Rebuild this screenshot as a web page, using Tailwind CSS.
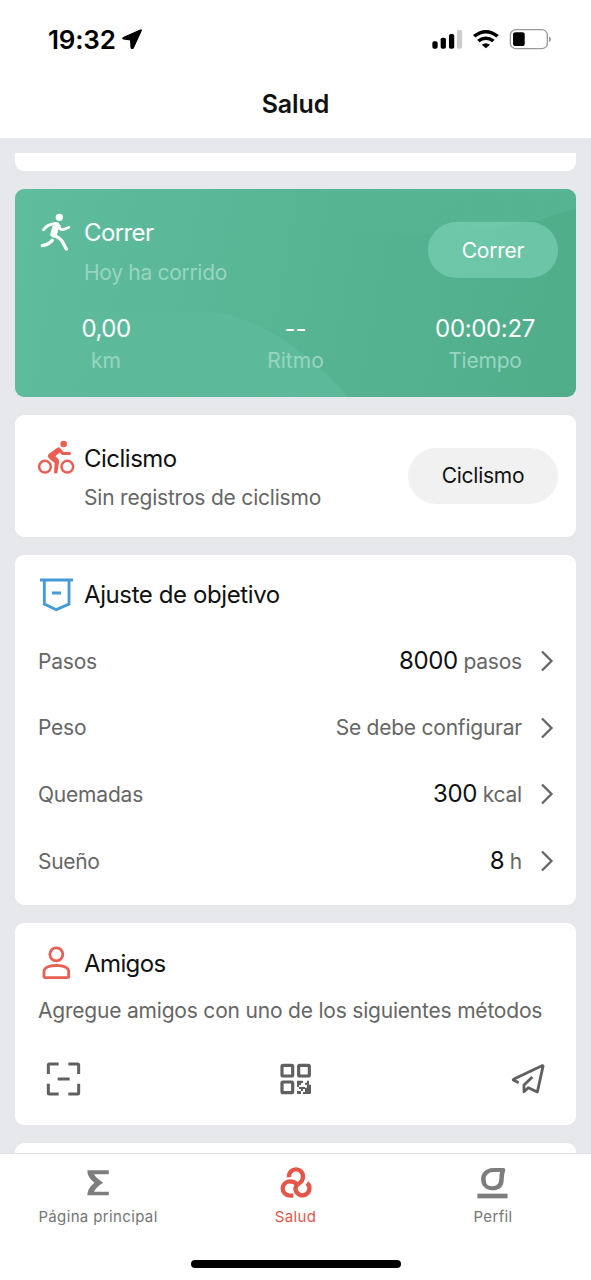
<!DOCTYPE html>
<html lang="es">
<head>
<meta charset="utf-8">
<title>Salud</title>
<script src="https://cdn.jsdelivr.net/npm/@tailwindcss/browser@4"></script>
</head>
<body class="flex h-[1280px] w-[591px] flex-col overflow-hidden bg-white font-['Inter','Liberation_Sans',sans-serif] text-[#111]">

<header class="flex h-[138px] shrink-0 flex-col">
  <div class="flex h-[78px] items-center justify-between pl-[48px] pr-[39px]">
    <div class="flex items-center gap-[6px]">
      <span class="pt-px text-[26px] leading-8 font-semibold tracking-[-0.2px] text-black">19:32</span>
      <svg class="h-[20px] w-[21px]" viewBox="324 88 56 60" preserveAspectRatio="none"><path d="M376 91 L354 145 Q349 149 348 143 L347 121 L328 118 Q324 116 328 113 L373 91Z" fill="#000" stroke="#000" stroke-width="3" stroke-linejoin="round"/></svg>
    </div>
    <svg class="mt-[3px] h-[24px] w-[120px]" viewBox="1146 86 318.4 72" preserveAspectRatio="none">
      <g fill="#000"><rect x="1147" y="123" width="14" height="22" rx="5"/><rect x="1169" y="112" width="14" height="33" rx="5"/><rect x="1191" y="101" width="14" height="44" rx="5"/><rect x="1212" y="89" width="14" height="56" rx="5" fill="#ccc"/></g>
      <g fill="none" stroke="#000" stroke-width="10"><path d="M1258 108 Q1289 80 1320 108"/><path d="M1269 122 Q1289 105 1309 122"/></g>
      <path d="M1278 133 Q1289 124 1300 133 L1289 144Z"/>
      <rect x="1354" y="88" width="98" height="57" rx="15" fill="none" stroke="#999" stroke-width="3.5"/>
      <rect x="1361" y="96" width="31" height="41" rx="7"/><path d="M1458 110 Q1463 117 1458 124Z" fill="#888" stroke="#888" stroke-width="2"/>
    </svg>
  </div>
  <h1 class="mt-[10px] text-center text-[25px] leading-8 font-semibold tracking-[-0.1px]">Salud</h1>
</header>

<main class="flex min-h-0 flex-1 flex-col gap-[18px] overflow-hidden bg-[#e7e8ec] px-[15px] pt-[15px]">
  <div class="h-[18px] shrink-0 rounded-b-[9px] bg-white"></div>

  <section class="relative h-[208px] shrink-0 overflow-hidden rounded-[9px] bg-linear-[100deg] from-[#5fbd9e] to-[#4fad8a] text-white">
    <svg class="absolute inset-0 h-full w-full" viewBox="15 189 561 208">
      <defs>
        <linearGradient id="low" gradientUnits="userSpaceOnUse" x1="60" y1="0" x2="300" y2="0"><stop stop-color="#65c3a4" stop-opacity="0"/><stop offset="1" stop-color="#65c3a4" stop-opacity=".42"/></linearGradient>
        <linearGradient id="high" gradientUnits="userSpaceOnUse" x1="330" y1="0" x2="576" y2="0"><stop stop-color="#65c3a4" stop-opacity="0"/><stop offset="1" stop-color="#65c3a4" stop-opacity=".28"/></linearGradient>
      </defs>
      <path d="M15 312 H215 C265 320 310 355 348 397 H15Z" fill="url(#low)"/>
      <path d="M300 189 H576 V208 C500 236 400 240 330 226Z" fill="url(#high)"/>
    </svg>
    <div class="relative flex h-[121px] items-start justify-between pr-[18px] pl-[23px]">
      <div class="flex gap-[9px]">
        <svg class="mt-[22px] h-[42px] w-[37px]" viewBox="114 93 111 126">
          <g fill="none" stroke="#fff" stroke-linecap="round" stroke-linejoin="round">
            <path d="M131 149 Q142 131 168 131" stroke-width="9"/>
            <path d="M178 138 Q180 151 189 149 L207 142" stroke-width="8"/>
            <path d="M169 136 L161 162" stroke-width="20"/>
            <path d="M160 165 Q181 174 187 185 L199 207" stroke-width="10"/>
            <path d="M127 197 Q147 194 157 181" stroke-width="10"/>
          </g><circle cx="178" cy="112" r="11" fill="#fff"/>
        </svg>
        <div>
          <h2 class="mt-[28px] text-2xl leading-8 tracking-[-0.6px]">Correr</h2>
          <p class="mt-[10px] text-[21px] leading-7 tracking-[-0.3px] text-[#98d5c1]">Hoy ha corrido</p>
        </div>
      </div>
      <button class="mt-[33px] h-[56px] w-[130px] rounded-full bg-[#8adcc4]/50 pt-px text-[21px] tracking-[-0.2px]">Correr</button>
    </div>
    <div class="relative grid grid-cols-3 text-center">
      <div class="-ml-[5px]"><div class="mt-[3px] text-[24px] leading-8 tracking-[-0.5px]">0,00</div><div class="text-[21px] leading-8 text-[#98d5c1]">km</div></div>
      <div><div class="mt-[3px] text-[24px] leading-8">--</div><div class="text-[21px] leading-8 text-[#98d5c1]">Ritmo</div></div>
      <div class="-mr-[5px]"><div class="mt-[3px] text-[24px] leading-8 tracking-[-0.35px]">00:00:27</div><div class="text-[21px] leading-8 tracking-[-0.2px] text-[#98d5c1]">Tiempo</div></div>
    </div>
  </section>

  <section class="flex h-[121.5px] shrink-0 items-start justify-between rounded-[9px] bg-white pr-[18px] pl-[23px]">
    <div class="flex gap-[9px]">
      <svg class="mt-[24px] h-[38px] w-[37px]" viewBox="54 57 111 114" fill="#e95f54">
        <circle cx="131" cy="72" r="10"/>
        <g fill="none" stroke="#e95f54" stroke-width="7.500"><circle cx="75" cy="140" r="17.500"/><circle cx="142" cy="140" r="17.500"/></g>
        <path d="M86 102 L112 83 Q118 80 122 86 L131 96 H152 V105 H127 L119 98 L106 109 L115 117 Q118 121 117 127 L112 160 H102 L104 129 L88 116 Q81 109 86 102Z"/>
      </svg>
      <div>
        <h2 class="mt-[28px] text-2xl leading-8 tracking-[-0.5px]">Ciclismo</h2>
        <p class="mt-[9px] text-[21px] leading-7 tracking-[-0.2px] text-[#666]">Sin registros de ciclismo</p>
      </div>
    </div>
    <button class="mt-[33px] h-[56px] w-[150px] rounded-full bg-[#f1f1f1] text-[21px] tracking-[-0.25px]">Ciclismo</button>
  </section>

  <section class="h-[350px] shrink-0 rounded-[9px] bg-white pr-[21px] pl-[23px]">
    <div class="flex h-[73px] items-center gap-[9px] pt-[8px]">
      <svg class="h-[38px] w-[37px]" viewBox="54 469 111 114" fill="none" stroke="#459bd8" stroke-width="8.500"><path d="M60 481H159M73 481V553L109 570L147 553V481M96 520H123"/></svg>
      <h2 class="text-2xl leading-8 tracking-[-0.4px]">Ajuste de objetivo</h2>
    </div>
    <div class="flex h-[66.7px] items-center text-[21px] tracking-[-0.2px] text-[#666]"><span class="flex-1 pt-px">Pasos</span><span class="pt-px"><b class="text-2xl font-normal tracking-[-0.4px] text-[#111]">8000</b> pasos</span><svg class="ml-[17px] h-6 w-[16px]" viewBox="0 0 16 24" fill="none" stroke="#666" stroke-width="2.300"><path d="M3 2.500L12.500 12L3 21.500"/></svg></div>
    <div class="flex h-[66.7px] items-center text-[21px] tracking-[-0.23px] text-[#666]"><span class="flex-1">Peso</span><span>Se debe configurar</span><svg class="ml-[17px] h-6 w-[16px]" viewBox="0 0 16 24" fill="none" stroke="#666" stroke-width="2.300"><path d="M3 2.500L12.500 12L3 21.500"/></svg></div>
    <div class="flex h-[66.7px] items-center text-[21px] tracking-[-0.2px] text-[#666]"><span class="flex-1 pt-[2px]">Quemadas</span><span class="pt-px"><b class="text-2xl font-normal tracking-[-0.4px] text-[#111]">300</b> kcal</span><svg class="ml-[17px] h-6 w-[16px]" viewBox="0 0 16 24" fill="none" stroke="#666" stroke-width="2.300"><path d="M3 2.500L12.500 12L3 21.500"/></svg></div>
    <div class="flex h-[66.7px] items-center text-[21px] tracking-[-0.3px] text-[#666]"><span class="flex-1 pt-[2px]">Sueño</span><span class="pt-px"><b class="text-2xl font-normal text-[#111]">8</b> h</span><svg class="ml-[17px] h-6 w-[16px]" viewBox="0 0 16 24" fill="none" stroke="#666" stroke-width="2.300"><path d="M3 2.500L12.500 12L3 21.500"/></svg></div>
  </section>

  <section class="h-[202px] shrink-0 rounded-[9px] bg-white px-[23px]">
    <div class="flex h-[73px] items-center gap-[9px] pt-[8px]">
      <svg class="h-[38px] w-[37px]" viewBox="54 42 111 114" fill="none" stroke="#e95f54" stroke-width="8.500"><circle cx="109" cy="73" r="19.500"/><path d="M72 143V122Q75 107 109 106Q143 107 146 122V139Q146 143 142 143H76Q72 143 72 139Z"/></svg>
      <h2 class="pt-[2px] text-2xl leading-8 tracking-[-0.6px]">Amigos</h2>
    </div>
    <p class="pt-px text-[21px] leading-7 tracking-[-0.2px] whitespace-nowrap text-[#666]">Agregue amigos con uno de los siguientes métodos</p>
    <div class="mt-[36px] flex items-center justify-between px-[7px]">
      <svg class="h-[36px] w-[36px]" viewBox="76 393 108 108" fill="none" stroke="#606060" stroke-width="9"><path d="M117 402H89Q86 402 86 405V432M146 402H174Q177 402 177 405V432M117 492H89Q86 492 86 489V461M146 492H174Q177 492 177 489V461M114 447H150"/></svg>
      <svg class="h-[36px] w-[36px]" viewBox="114 63 108 108" fill="#606060">
        <g fill="none" stroke="#606060" stroke-width="9.500"><rect x="126" y="76" width="32" height="32" rx="3"/><rect x="176" y="76" width="32" height="32" rx="3"/><rect x="126" y="126" width="32" height="32" rx="3"/></g>
        <path d="M171 122H189V129H183V135H177V141H171ZM195 134V128H201V122H207V134H213V158Q213 162 209 162H189V156H195V143H201V134ZM183 141H195V147H189V153H183V147H177V141ZM171 153H183V162H171Z"/>
      </svg>
      <svg class="h-[36px] w-[36px]" viewBox="809 63 108 108" fill="none" stroke="#606060" stroke-width="8.500" stroke-linejoin="round"><path d="M835 128L819 120Q818 118 821 117L905 77Q908 76 908 79L891 156L864 143L851 155V135L876 111"/></svg>
    </div>
  </section>

  <div class="h-[40px] shrink-0 rounded-t-[9px] bg-white"></div>
</main>

<footer class="flex h-[127px] shrink-0 flex-col border-t border-[#dfe1e4] bg-white">
  <nav class="flex justify-between px-[10px] text-[15px] leading-5 tracking-[0.36px] text-[#757575]">
    <a class="flex w-[176px] flex-col items-center gap-[3px] pt-[12px]">
      <svg class="h-[38px] w-[38px]" viewBox="210 107 100.800 114" preserveAspectRatio="none" fill="#7d7d7d"><path d="M232 120H289V132H250Q254 142 274 157Q254 171 250 184H289V195H232Q232 174 251 157Q232 142 232 120Z"/></svg>
      <span>Página principal</span>
    </a>
    <a class="flex w-[176px] flex-col items-center gap-[3px] pt-[12px] text-[#e4564a]">
      <svg class="h-[38px] w-[38px]" viewBox="5 18 114 114" fill="none" stroke="#e4564a" stroke-width="13"><path d="M41 52V49A21 21 0 0 1 83 49C83 60 78 67 70 71C63 75 60.500 80 60.500 87A21 21 0 1 0 95 69"/><path d="M54 107H43.500A21.500 21.500 0 1 1 43.500 64Q56 64 63 71"/></svg>
      <span>Salud</span>
    </a>
    <a class="flex w-[176px] flex-col items-center gap-[3px] pt-[12px]">
      <svg class="h-[38px] w-[38px]" viewBox="1257 107 100.800 114" preserveAspectRatio="none" fill="none" stroke="#7d7d7d" stroke-width="12"><path d="M1334 119H1308A26 26 0 0 0 1282 148C1282 164 1292 174 1306 174C1322 174 1330 164 1330 146Q1330 130 1334 119Z" stroke-linejoin="round"/><path d="M1266 197H1346" stroke-width="14"/></svg>
      <span>Perfil</span>
    </a>
  </nav>
  <div class="mt-auto mb-[12px] h-[8px] w-[210px] self-center rounded-full bg-black"></div>
</footer>
</body>
</html>
